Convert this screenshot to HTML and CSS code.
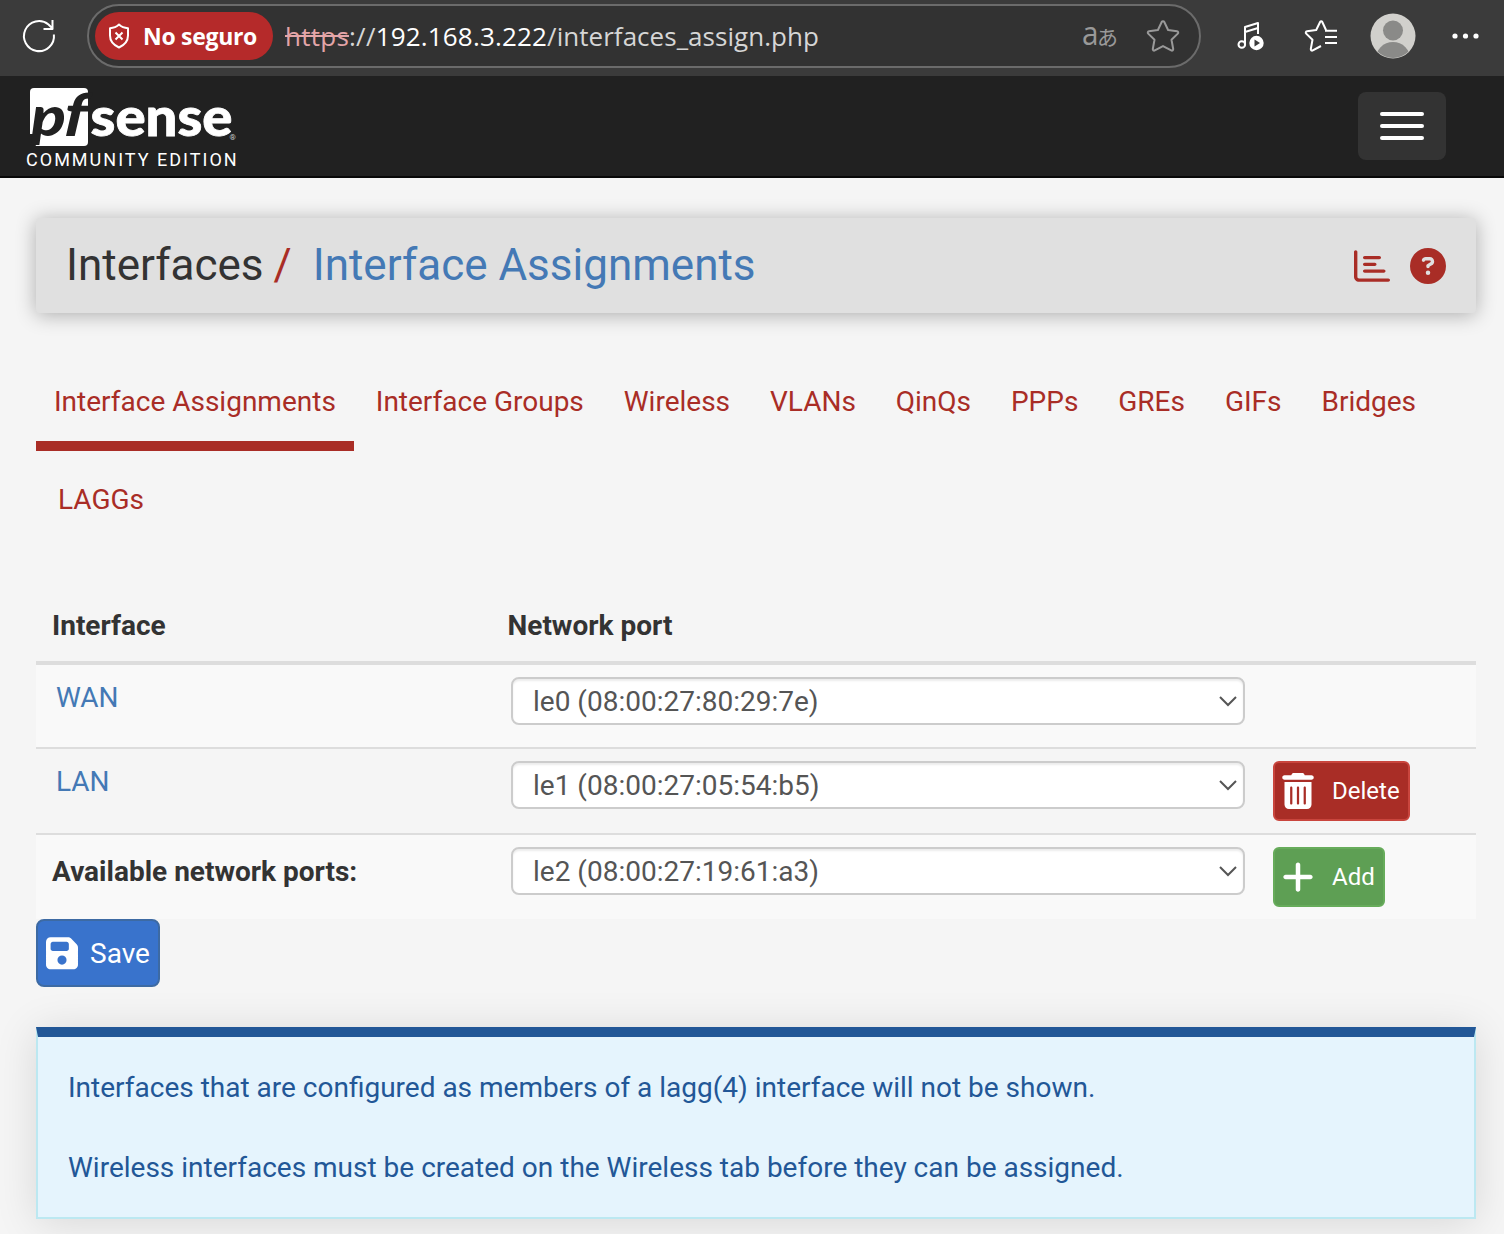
FILE: index.html
```html
<!DOCTYPE html>
<html lang="es">
<head>
<meta charset="utf-8">
<title>Interfaces: Interface Assignments</title>
<link rel="stylesheet" href="styles.css">
</head>
<body>
<header class="browser">
  <svg class="reload" width="36" height="36" viewBox="0 0 36 36"><path d="M32.9 16.500A15 15 0 1 1 27.500 6.500L31.500 10.500M31.500 2V11H22.500"/></svg>
  <div class="address">
    <div class="badge">
      <svg width="22" height="26" viewBox="0 0 22 26"><path d="M11 1.500C8.500 4 5.500 5 2 5.200V12.500C2 18.500 5.500 22 11 24.500C16.500 22 20 18.500 20 12.500V5.200C16.500 5 13.500 4 11 1.500ZM7.500 9.500L14.500 16.500M14.500 9.500L7.500 16.500"/></svg>
      <span>No seguro</span>
    </div>
    <div class="url"><span class="scheme"><s>https</s>://</span><b>192.168.3.222</b><span class="path">/interfaces_assign.php</span></div>
    <div class="translate"><span class="latin">a</span><span class="kana">あ</span></div>
    <svg class="star" width="34" height="34" viewBox="0 0 34 34"><path d="M15.700 3C16.200 2 17.800 2 18.300 3L22.100 11L31 12.300C32.300 12.500 32.600 13.800 31.800 14.600L25.500 20.700L27.200 30C27.400 31.200 26.300 32 25.200 31.400L17 27.100L8.800 31.400C7.700 32 6.600 31.200 6.800 30L8.500 20.700L2.200 14.600C1.400 13.800 1.700 12.500 3 12.300L11.900 11Z"/></svg>
  </div>
  <svg class="tool music" width="28" height="30" viewBox="0 0 28 30"><path d="M8 24V6L21 2V13M8 11L21 7"/><circle cx="4.800" cy="23.500" r="3.300"/><circle class="solid" cx="19.500" cy="22" r="7.200"/><path class="play" d="M17.500 18.500L23 22L17.500 25.500Z"/></svg>
  <svg class="tool favs" width="34" height="34" viewBox="0 0 34 34"><path d="M22 11L18.300 3C17.800 2 16.600 2 16.100 3L12.200 11L3 12.300C1.700 12.500 1.400 13.800 2.200 14.600L8.500 20.700L6.800 30C6.600 31.200 7.700 32 8.800 31.400L17 27M21 11.700H33M21 18H33M21 24H33"/></svg>
  <svg class="avatar" width="46" height="46" viewBox="0 0 46 46"><defs><clipPath id="face"><circle cx="23" cy="23" r="22"/></clipPath></defs><circle cx="23" cy="23" r="22.500" fill="#d1d0cc"/><g clip-path="url(#face)" fill="#8a8a88"><circle cx="23" cy="17.500" r="10"/><circle cx="23" cy="46.500" r="17.500"/></g></svg>
  <svg class="dots" width="28" height="6" viewBox="0 0 28 6"><circle cx="3" cy="3" r="2.600"/><circle cx="13.500" cy="3" r="2.600"/><circle cx="24" cy="3" r="2.600"/></svg>
</header>

<nav class="navbar">
  <div class="brand">
    <svg class="logo" width="214" height="76" viewBox="26 76 214 76">
      <rect x="30" y="88" width="58" height="58" rx="4" fill="#fff"/>
      <path d="M29 134H38L35.500 147H29Z" fill="#212121"/>
      <text class="pf" x="31" y="136" textLength="35" lengthAdjust="spacingAndGlyphs">p</text>
      <text class="f" transform="translate(60 136) skewX(-13)" textLength="23" lengthAdjust="spacingAndGlyphs">f</text>
      <text class="sense" x="90.500" y="136" textLength="142" lengthAdjust="spacingAndGlyphs">sense</text>
      <text class="reg" x="229.500" y="140">®</text>
    </svg>
    <div class="edition">COMMUNITY EDITION</div>
  </div>
  <div class="toggle"><i></i><i></i><i></i></div>
</nav>

<main>
  <div class="crumbs">
    <h1><span>Interfaces</span><em>/</em><a>Interface Assignments</a></h1>
    <svg width="36" height="36" viewBox="0 0 512 512"><path d="M24 32c13.300 0 24 10.700 24 24V408c0 13.300 10.700 24 24 24H488c13.300 0 24 10.700 24 24s-10.700 24-24 24H72c-39.800 0-72-32.200-72-72V56C0 42.700 10.700 32 24 32zM128 136c0-13.300 10.700-24 24-24h208c13.300 0 24 10.700 24 24s-10.700 24-24 24H152c-13.300 0-24-10.700-24-24zm24 72H296c13.300 0 24 10.700 24 24s-10.700 24-24 24H152c-13.300 0-24-10.700-24-24s10.700-24 24-24zm0 96H424c13.300 0 24 10.700 24 24s-10.700 24-24 24H152c-13.300 0-24-10.700-24-24s10.700-24 24-24z"/></svg>
    <svg width="36" height="36" viewBox="0 0 512 512"><path d="M256 512A256 256 0 1 0 256 0a256 256 0 1 0 0 512zM169.800 165.300c7.900-22.300 29.100-37.300 52.800-37.300h58.300c34.900 0 63.100 28.300 63.100 63.100c0 22.600-12.100 43.500-31.700 54.800L280 264.400c-.2 13-10.900 23.600-24 23.600c-13.300 0-24-10.700-24-24V250.500c0-8.600 4.600-16.500 12.100-20.800l44.300-25.400c4.700-2.700 7.600-7.700 7.600-13.100c0-8.400-6.800-15.100-15.100-15.100H222.600c-3.400 0-6.400 2.100-7.500 5.300l-.4 1.200c-4.400 12.500-18.200 19-30.600 14.600s-19-18.200-14.600-30.600l.4-1.200zM224 352a32 32 0 1 1 64 0 32 32 0 1 1 -64 0z"/></svg>
  </div>

  <ul class="tabs">
    <li class="active">Interface Assignments</li>
    <li>Interface Groups</li>
    <li>Wireless</li>
    <li>VLANs</li>
    <li>QinQs</li>
    <li>PPPs</li>
    <li>GREs</li>
    <li>GIFs</li>
    <li>Bridges</li>
    <li class="wrapped">LAGGs</li>
  </ul>

  <section class="ports">
    <div class="row head"><div>Interface</div><div>Network port</div></div>
    <div class="row odd">
      <a>WAN</a>
      <div class="select"><span>le0 (08:00:27:80:29:7e)</span><svg width="20" height="12" viewBox="0 0 20 12"><path d="M2 2L10 10L18 2"/></svg></div>
    </div>
    <div class="row">
      <a>LAN</a>
      <div class="select"><span>le1 (08:00:27:05:54:b5)</span><svg width="20" height="12" viewBox="0 0 20 12"><path d="M2 2L10 10L18 2"/></svg></div>
      <button class="btn danger"><svg width="32" height="36" viewBox="0 0 448 512"><path d="M135.200 17.700C140.600 6.800 151.700 0 163.800 0H284.200c12.100 0 23.200 6.800 28.600 17.700L320 32h96c17.700 0 32 14.300 32 32s-14.300 32-32 32H32C14.300 96 0 81.700 0 64S14.300 32 32 32h96l7.200-14.300zM32 128H416V448c0 35.300-28.700 64-64 64H96c-35.300 0-64-28.700-64-64V128zm96 64c-8.800 0-16 7.200-16 16V432c0 8.800 7.200 16 16 16s16-7.200 16-16V208c0-8.800-7.200-16-16-16zm96 0c-8.800 0-16 7.200-16 16V432c0 8.800 7.200 16 16 16s16-7.200 16-16V208c0-8.800-7.200-16-16-16zm96 0c-8.800 0-16 7.200-16 16V432c0 8.800 7.200 16 16 16s16-7.200 16-16V208c0-8.800-7.200-16-16-16z"/></svg><span>Delete</span></button>
    </div>
    <div class="row odd last">
      <strong>Available network ports:</strong>
      <div class="select"><span>le2 (08:00:27:19:61:a3)</span><svg width="20" height="12" viewBox="0 0 20 12"><path d="M2 2L10 10L18 2"/></svg></div>
      <button class="btn success"><svg width="32" height="36" viewBox="0 0 448 512"><path d="M256 80c0-17.700-14.300-32-32-32s-32 14.300-32 32V224H48c-17.700 0-32 14.300-32 32s14.300 32 32 32H192V432c0 17.700 14.300 32 32 32s32-14.300 32-32V288H400c17.700 0 32-14.300 32-32s-14.300-32-32-32H256V80z"/></svg><span>Add</span></button>
    </div>
  </section>

  <button class="btn save"><svg width="32" height="36.500" viewBox="0 0 448 512"><path d="M64 32C28.700 32 0 60.700 0 96V416c0 35.300 28.700 64 64 64H384c35.300 0 64-28.700 64-64V173.300c0-17-6.700-33.300-18.700-45.300L352 50.700C340 38.700 323.700 32 306.700 32H64zm0 96c0-17.700 14.300-32 32-32H288c17.700 0 32 14.300 32 32v64c0 17.700-14.300 32-32 32H96c-17.700 0-32-14.300-32-32V128zM224 288a64 64 0 1 1 0 128 64 64 0 1 1 0-128z"/></svg><span>Save</span></button>

  <div class="info">
    <p>Interfaces that are configured as members of a lagg(4) interface will not be shown.</p>
    <p>Wireless interfaces must be created on the Wireless tab before they can be assigned.</p>
  </div>
</main>
</body>
</html>
```
FILE: styles.css
```css
* { box-sizing: border-box; }
body {
  margin: 0;
  height: 1234px;
  overflow: hidden;
  background: #f5f5f5;
  color: #333;
  font: 28px/42px Roboto, sans-serif;
}
svg { display: block; flex: none; }

/* Browser toolbar */
.browser {
  display: flex;
  align-items: center;
  height: 76px;
  padding-left: 21px;
  padding-bottom: 4px;
  background: #3b3b3b;
  font-family: "Open Sans", "Noto Sans", sans-serif;
}
.reload, .star, .tool, .badge svg { fill: none; stroke: #fff; stroke-width: 2; stroke-linejoin: round; }
.address {
  display: flex;
  align-items: center;
  width: 1114px;
  height: 64px;
  margin-left: 30px;
  padding: 0 19px 0 6px;
  border: 2px solid #6b6b6b;
  border-radius: 32px;
  background: #323232;
}
.badge {
  display: flex;
  align-items: center;
  gap: 13px;
  width: 178px;
  height: 48px;
  padding-left: 13px;
  border-radius: 24px;
  background: #b52a2a;
  color: #fff;
  font-size: 23px;
  font-weight: 700;
  letter-spacing: -.3px;
  white-space: nowrap;
}
.badge span { padding-bottom: 1px; }
.url {
  margin-left: 12px;
  color: #d6d6d6;
  font-size: 26px;
  letter-spacing: .04px;
  white-space: nowrap;
}
.scheme { letter-spacing: .25px; }
.url s { color: #e3a5a8; }
.url b { color: #fff; font-weight: 400; letter-spacing: .17px; }
.translate {
  display: flex;
  align-items: center;
  margin-left: auto;
  margin-right: 28px;
  color: #999;
}
.latin { padding-bottom: 7px; font-size: 33px; font-weight: 400; transform: scaleX(.9); }
.kana { margin-left: -2px; font: 21px/40px "Noto Sans CJK JP", sans-serif; }
.star { stroke: #999; }
.music { margin-left: 36px; }
.music .solid { fill: #fff; stroke: none; }
.music .play { fill: #3b3b3b; stroke: none; }
.favs { margin-left: 39px; }
.avatar { margin-left: 32px; }
.dots { margin-left: 36px; fill: #fff; }

/* Site navigation */
.navbar {
  display: flex;
  justify-content: space-between;
  height: 102px;
  padding: 0 58px 0 26px;
  border-bottom: 2px solid #080808;
  background: #212121;
}
.logo { margin-bottom: -4px; overflow: visible; }
.pf { font: italic 900 56px Lato, sans-serif; fill: #212121; }
.f { font: 900 59px Lato, sans-serif; fill: #212121; }
.sense { font: 900 54px Lato, sans-serif; fill: #fff; stroke: #fff; stroke-width: .8; }
.reg { font: 8px Roboto, sans-serif; fill: #ccc; }
.edition {
  color: #fff;
  font-size: 18px;
  line-height: 23px;
  letter-spacing: 2.020px;
  white-space: nowrap;
}
.toggle {
  display: flex;
  flex-direction: column;
  align-items: center;
  justify-content: center;
  gap: 8px;
  width: 88px;
  height: 68px;
  margin-top: 16px;
  border-radius: 8px;
  background: #333;
}
.toggle i { width: 44px; height: 4px; border-radius: 2px; background: #fff; }

main { padding: 40px 28px 0 36px; }

/* Page heading */
.crumbs {
  display: flex;
  align-items: center;
  gap: 20px;
  height: 95px;
  padding: 0 30px 1px;
  border-radius: 4px;
  background: #e0e0e0;
  box-shadow: 0 2px 20px rgba(0, 0, 0, .3);
}
.crumbs svg { margin-top: 1px; fill: #a92d26; }
.crumbs h1 { flex: 1; margin: 0; font-size: 44px; font-weight: 400; white-space: nowrap; }
.crumbs em { margin: 0 21px 0 10px; color: #a92d26; font-style: normal; }
.crumbs a { color: #4479b5; }

/* Tabs */
.tabs {
  display: flex;
  flex-wrap: wrap;
  column-gap: 3.930px;
  margin: 40px 0 0;
  padding: 0;
  list-style: none;
  color: #a92d26;
}
.tabs li { height: 98px; padding: 28px 18px 0; border-bottom: 10px solid transparent; white-space: nowrap; }
.tabs .active { border-color: #a92d26; }
.tabs .wrapped { margin-left: 4px; }

/* Port assignments */
.ports { margin-top: 36px; }
.row {
  display: grid;
  grid-template-columns: 459px 762px 1fr;
  align-items: start;
  height: 86px;
  padding: 12px 16px 0;
  border-bottom: 2px solid #ddd;
}
.head { height: 80px; padding-top: 20px; grid-template-columns: 455.500px 1fr; border-bottom-width: 4px; font-weight: 700; }
.odd { height: 84px; background: #f9f9f9; }
.last { border-bottom: 0; }
.row a { padding-left: 4px; color: #4479b5; }
.row strong { padding-top: 4px; font-weight: 700; }
.select {
  display: flex;
  align-items: center;
  justify-content: space-between;
  width: 734px;
  height: 48px;
  padding: 0 5px 0 20px;
  border: 2px solid #ccc;
  border-radius: 8px;
  background: #fff;
  box-shadow: inset 0 2px 2px rgba(0, 0, 0, .075);
  color: #555;
}
.select span { padding-top: 2px; }
.select svg { fill: none; stroke: #555; stroke-width: 2; }

/* Buttons */
.btn {
  display: flex;
  align-items: center;
  gap: 18px;
  width: 137px;
  height: 60px;
  padding: 0 0 0 7px;
  border: 2px solid #c9453d;
  border-radius: 6px;
  background: #a92d26;
  color: #fff;
  font: 24px/36px Roboto, sans-serif;
}
.btn svg { fill: #fff; }
.success { width: 112px; border-color: #67ac5b; background: #5e9f54; }
.save { gap: 12px; width: 124px; height: 68px; padding-left: 8px; border-color: #3d6aa3; border-radius: 8px; background: #3973cc; font-size: 28px; }
.save span { padding-top: 2px; }

/* Notice */
.info {
  height: 192px;
  margin-top: 40px;
  padding: 30px;
  border: 2px solid #bce8f1;
  border-top: 10px solid #225797;
  background: #e5f4fd;
  box-shadow: 0 4px 40px rgba(0, 0, 0, .12);
  color: #225797;
}
.info p { margin: 0 0 38px; white-space: nowrap; }
```
